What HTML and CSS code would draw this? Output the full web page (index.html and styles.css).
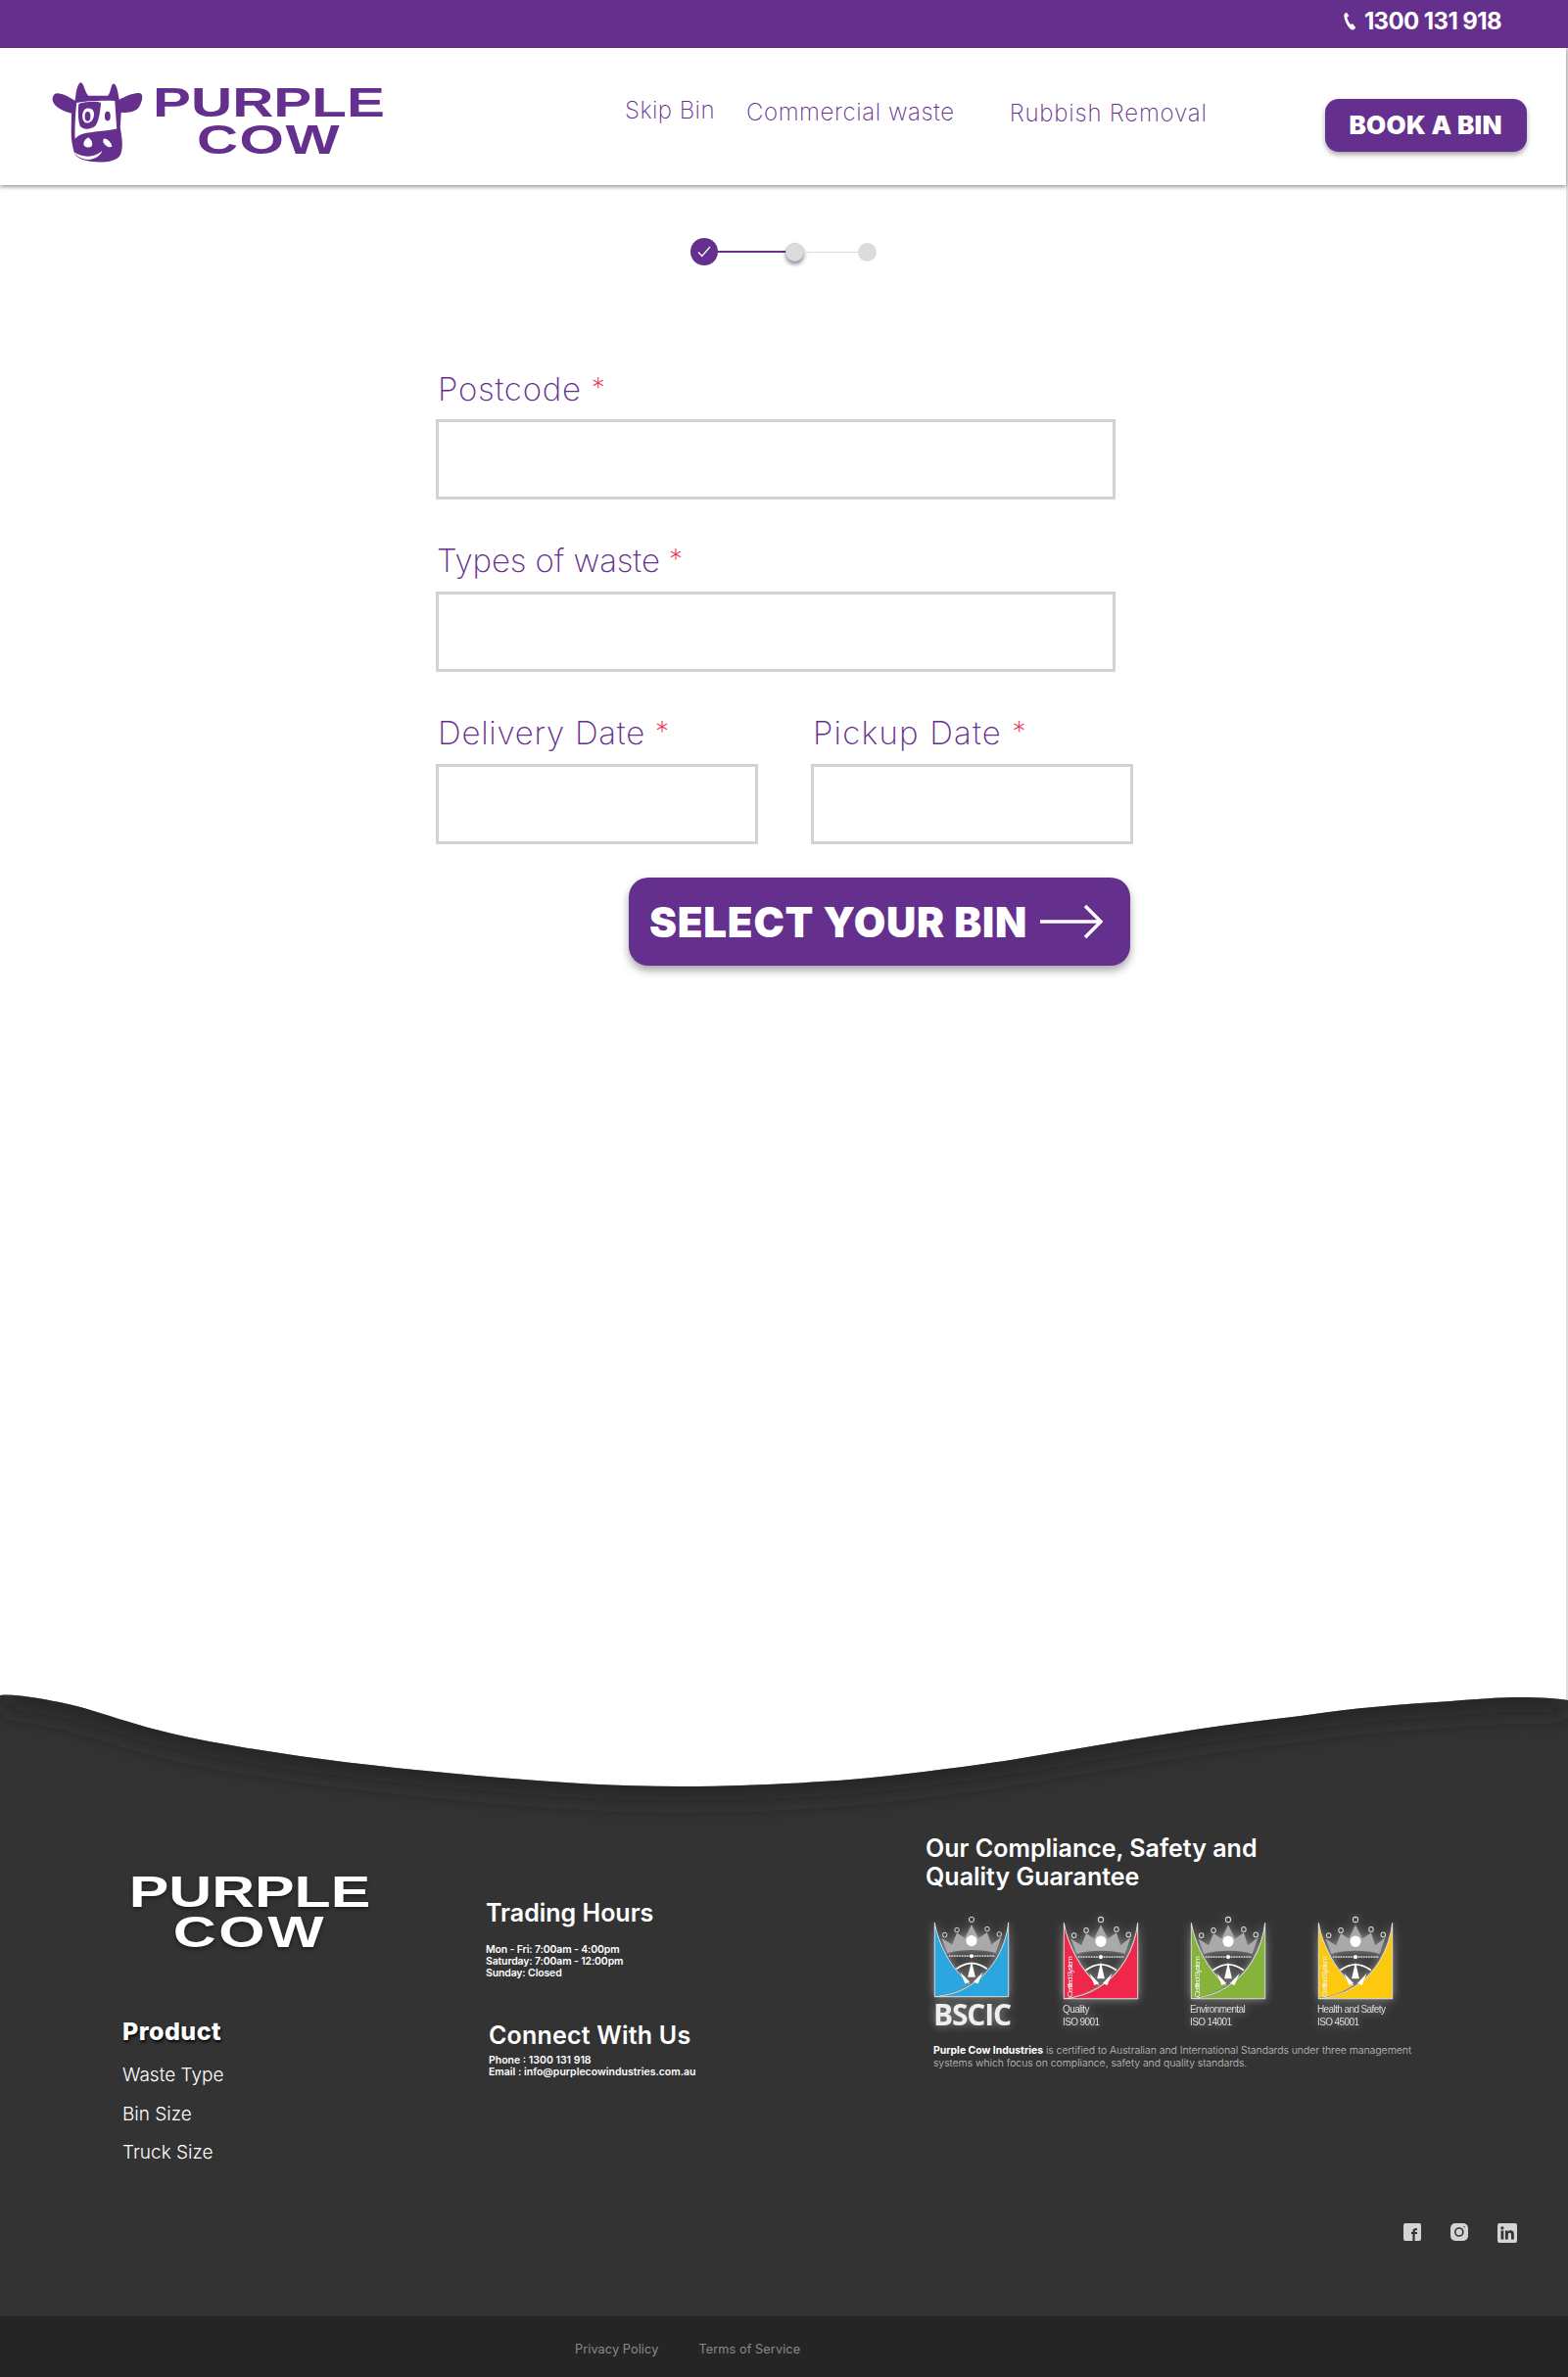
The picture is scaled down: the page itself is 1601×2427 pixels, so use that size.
FILE: index.html
```html
<!DOCTYPE html>
<html lang="en">
<head>
  <meta charset="UTF-8"/>
  <title>Purple Cow – Book a Bin</title>
  <meta name="viewport" content="width=device-width, initial-scale=1.0"/>
  <link rel="stylesheet" href="styles.css">
</head>
<body>

  <svg class="defs" width="0" height="0" aria-hidden="true">
    <symbol id="crest" viewBox="36 20 240 256" preserveAspectRatio="none">
      <path fill="currentColor" d="M40 44C52 110 90 185 150 232C115 255 80 266 40 270Z"/>
      <path fill="currentColor" d="M272 44C262 130 215 200 150 238C115 260 80 268 46 272H272Z"/>
      <path fill="none" stroke="#ddd" stroke-width="3" d="M40 44V272H272V44M40 44C52 110 90 185 150 232M272 44C262 130 215 200 150 238C115 260 80 268 40 272"/>
      <path fill="#a9a9a9" d="M80 138L62 92L95 112L110 76L135 92L156 50L178 92L205 74L218 112L250 88L232 138C190 125 125 125 80 138Z"/>
      <circle cx="156" cy="100" r="17" fill="#fff"/>
      <g fill="none" stroke="#ddd" stroke-width="3">
        <circle cx="156" cy="35" r="8"/>
        <circle cx="110" cy="67" r="7"/>
        <circle cx="205" cy="64" r="7"/>
        <circle cx="72" cy="82" r="7"/>
        <circle cx="243" cy="80" r="7"/>
      </g>
      <path stroke="#ddd" stroke-width="5" stroke-dasharray="3 2" d="M85 147H228"/>
      <circle cx="156" cy="147" r="6" fill="#fff"/>
      <path fill="none" stroke="#fff" stroke-width="5" d="M108 187Q156 152 205 187"/>
      <path fill="#fff" d="M144 212L156 162L168 212ZM120 196L150 226L136 232ZM192 196L162 226L176 232Z"/>
    </symbol>
  </svg>

  <div class="topbar">
    <svg class="phone-icon" viewBox="0 0 12 18"><path fill="#fff" d="M2.6.6L.9 1.7C-.3 2.6.1 5.8 1.7 9.6c1.6 3.800 3.900 7 5.500 7.600.9.300 2 .400 3-.400l1.300-1.300-3.100-4.100-1.800 1c-.5-.4-1.700-2.100-2.500-3.900C3.300 6.700 3 5.500 3.200 5l1.800-.9Z"/></svg>
    <span class="phone-number">1300 131 918</span>
  </div>

  <header class="site-header">
    <a class="logo" href="#">
      <svg class="cow" viewBox="60 64 294 260">
        <path fill="#652f8d" d="M138 112C140 90 147 68 155 68C163 68 166 95 178 110H240C250 98 250 72 258 72C268 72 272 100 276 122C295 112 325 98 342 102C354 106 348 130 338 146C328 160 305 165 282 162L279 210C284 240 290 270 280 295C270 318 225 322 190 318C160 314 140 306 134 290C128 270 124 250 124 225L125 165C105 160 80 150 70 135C60 120 66 103 80 102C98 102 120 115 136 125Z"/>
        <path fill="#fff" d="M141 132C175 126 225 124 262 126L268 214C235 222 190 222 160 230C150 233 140 240 136 246C135 210 137 170 141 132Z"/>
        <path fill="#652f8d" d="M148 135C170 128 205 126 218 132C216 155 212 190 200 205C185 218 160 218 152 205C145 185 145 155 148 135Z"/>
        <path fill="#fff" d="M172 150C188 146 198 156 196 172C194 188 180 200 168 194C156 188 156 155 172 150Z"/>
        <ellipse cx="176" cy="175" rx="9" ry="15" fill="#652f8d"/>
        <ellipse cx="239" cy="174" rx="9" ry="15" fill="#652f8d"/>
        <path fill="#fff" d="M178 241C190 250 194 262 188 270C178 276 164 272 163 262C164 252 170 245 178 241ZM228 245C240 246 252 258 253 270C245 276 232 268 226 258C224 252 225 248 228 245Z"/>
        <path fill="#fff" d="M132 288C160 305 195 308 222 284C214 305 190 315 165 310C150 307 138 298 132 288Z"/>
      </svg>
      <span class="wordmark"><span>PURPLE</span><span>COW</span></span>
    </a>
    <nav class="main-nav">
      <a class="nav-skip" href="#">Skip Bin</a>
      <a class="nav-commercial" href="#">Commercial waste</a>
      <a class="nav-rubbish" href="#">Rubbish Removal</a>
    </nav>
    <a class="book-btn" href="#">BOOK A BIN</a>
  </header>

  <main class="main">
    <div class="stepper">
      <span class="step step-done">
        <svg viewBox="0 0 14 12" width="14" height="12"><path fill="none" stroke="#fff" stroke-width="1.300" d="M1 6.500L4.800 10.500L13 1"/></svg>
      </span>
      <span class="step-line step-line-done"></span>
      <span class="step step-current"></span>
      <span class="step-line"></span>
      <span class="step"></span>
    </div>

    <form class="book-form">
      <div class="field field-wide">
        <label class="label-postcode">Postcode <em>*</em></label>
        <input type="text">
      </div>
      <div class="field field-wide">
        <label class="label-types">Types of waste <em>*</em></label>
        <input type="text">
      </div>
      <div class="date-row">
        <div class="field">
          <label class="label-delivery">Delivery Date <em>*</em></label>
          <input type="text">
        </div>
        <div class="field">
          <label class="label-pickup">Pickup Date <em>*</em></label>
          <input type="text">
        </div>
      </div>
      <button class="select-btn" type="button">
        SELECT YOUR BIN
        <svg viewBox="0 0 64 36" width="64" height="36"><path fill="none" stroke="#fff" stroke-width="3.500" d="M0 18H61M46 2L62 18L46 34"/></svg>
      </button>
    </form>
  </main>

  <footer class="site-footer">
    <svg class="wave" viewBox="0 0 1601 140" width="1601" height="140" preserveAspectRatio="none">
      <defs>
        <clipPath id="wave-clip"><path d="M0 1C14-1 38 4 61 8C85 13 105 20 128 27C185 45 245 54 306 63C370 72 440 79 510 85C570 90 630 94 694 94C755 94 815 91 868 87C925 82 985 74 1032 67C1080 59 1125 51 1175 43C1225 35 1275 28 1328 22C1380 14 1430 10 1481 7C1505 5 1530 3 1552 3C1572 3 1590 4 1601 6V140H0Z"/></clipPath>
        <filter id="wave-blur" x="-5%" y="-100%" width="110%" height="300%"><feGaussianBlur stdDeviation="14"/></filter>
      </defs>
      <path fill="#333" d="M0 1C14-1 38 4 61 8C85 13 105 20 128 27C185 45 245 54 306 63C370 72 440 79 510 85C570 90 630 94 694 94C755 94 815 91 868 87C925 82 985 74 1032 67C1080 59 1125 51 1175 43C1225 35 1275 28 1328 22C1380 14 1430 10 1481 7C1505 5 1530 3 1552 3C1572 3 1590 4 1601 6V140H0Z"/>
      <g clip-path="url(#wave-clip)">
        <path fill="none" stroke="#222" stroke-width="22" filter="url(#wave-blur)" d="M0 1C14-1 38 4 61 8C85 13 105 20 128 27C185 45 245 54 306 63C370 72 440 79 510 85C570 90 630 94 694 94C755 94 815 91 868 87C925 82 985 74 1032 67C1080 59 1125 51 1175 43C1225 35 1275 28 1328 22C1380 14 1430 10 1481 7C1505 5 1530 3 1552 3C1572 3 1590 4 1601 6"/>
      </g>
    </svg>

    <div class="footer-body">
      <div class="footer-col">
        <div class="footer-logo"><span>PURPLE</span><span>COW</span></div>
        <h3 class="product-title">Product</h3>
        <ul class="product-links">
          <li><a href="#">Waste Type</a></li>
          <li><a href="#">Bin Size</a></li>
          <li><a href="#">Truck Size</a></li>
        </ul>
      </div>

      <div class="footer-col">
        <h3 class="footer-title">Trading Hours</h3>
        <p class="small-info hours">Mon - Fri: 7:00am - 4:00pm<br/>Saturday: 7:00am - 12:00pm<br/>Sunday: Closed</p>
        <h3 class="footer-title connect-title">Connect With Us</h3>
        <p class="small-info contact">Phone : 1300 131 918<br/>Email : info@purplecowindustries.com.au</p>
      </div>

      <div class="footer-col">
        <h3 class="footer-title compliance-title">Our Compliance, Safety and<br/>Quality Guarantee</h3>
        <div class="badges">
          <div class="badge badge-main">
            <svg class="crest crest-blue"><use href="#crest"/></svg>
            <span class="bscic">BSCIC</span>
          </div>
          <div class="badge">
            <svg class="crest crest-red" viewBox="36 20 240 256" preserveAspectRatio="none"><use href="#crest" x="36" y="20" width="240" height="256"/><text class="crest-label" transform="translate(66 268) rotate(-90)" textLength="124">Certified System</text></svg>
            <span class="badge-caption">Quality<br/>ISO 9001</span>
          </div>
          <div class="badge">
            <svg class="crest crest-green" viewBox="36 20 240 256" preserveAspectRatio="none"><use href="#crest" x="36" y="20" width="240" height="256"/><text class="crest-label" transform="translate(66 268) rotate(-90)" textLength="124">Certified System</text></svg>
            <span class="badge-caption">Environmental<br/>ISO 14001</span>
          </div>
          <div class="badge">
            <svg class="crest crest-yellow" viewBox="36 20 240 256" preserveAspectRatio="none"><use href="#crest" x="36" y="20" width="240" height="256"/><text class="crest-label" transform="translate(66 268) rotate(-90)" textLength="124">Certified System</text></svg>
            <span class="badge-caption">Health and Safety<br/>ISO 45001</span>
          </div>
        </div>
        <p class="compliance-text"><strong>Purple Cow Industries</strong> is certified to Australian and International Standards under three management systems which focus on compliance, safety and quality standards.</p>
        <div class="social">
          <a href="#"><svg viewBox="0 0 18 18" width="18" height="18"><rect width="18" height="18" rx="2" fill="#d4d4d4"/><path fill="none" stroke="#333" stroke-width="2.200" d="M10.500 18V8.500C10.500 6.500 11.500 6 14 6M8 10H14"/></svg></a>
          <a href="#"><svg viewBox="0 0 18 18" width="18" height="18"><rect width="18" height="18" rx="5" fill="#d4d4d4"/><circle cx="8.800" cy="9" r="4" fill="none" stroke="#333" stroke-width="1.600"/><circle cx="14" cy="3.800" r=".7" fill="#333"/></svg></a>
          <a href="#"><svg viewBox="0 0 20 20" width="20" height="20"><rect width="20" height="20" rx="2" fill="#d4d4d4"/><rect x="3.500" y="7.500" width="2.800" height="9" fill="#333"/><circle cx="4.900" cy="4.900" r="1.600" fill="#333"/><path fill="#333" d="M8 7.500H10.600V8.800C11.200 7.800 12.200 7.300 13.400 7.300C15.800 7.300 16.800 8.800 16.800 11.300V16.500H14V11.800C14 10.500 13.600 9.700 12.500 9.700C11.400 9.700 10.800 10.500 10.800 11.800V16.500H8Z"/></svg></a>
        </div>
      </div>
    </div>

    <div class="footer-bottom">
      <a href="#">Privacy Policy</a>
      <a href="#">Terms of Service</a>
    </div>
  </footer>

</body>
</html>
```

FILE: styles.css
```css
* {
  box-sizing: border-box;
}
body {
  margin: 0;
  width: 1601px;
  font-family: Inter, "Open Sans", sans-serif;
  background: linear-gradient(90deg, #fff 1599px, #dedede 1599px);
  color: #652f8d;
}
a {
  color: inherit;
  text-decoration: none;
}
.defs {
  position: absolute;
}

/* top bar */
.topbar {
  height: 49px;
  background: #652f8d;
  display: flex;
  align-items: center;
  justify-content: flex-end;
  padding-right: 68px;
  padding-bottom: 6px;
  color: #fff;
}
.phone-icon {
  width: 15px;
  height: 19px;
  margin-right: 7px;
}
.phone-number {
  font-size: 24px;
  font-weight: 700;
  letter-spacing: -0.6px;
}

/* header */
.site-header {
  position: relative;
  height: 140px;
  margin-right: 2px;
  background: #fff;
  box-shadow: 0 2px 4px rgba(0, 0, 0, 0.4);
  display: flex;
}
.logo {
  display: flex;
  margin-left: 51px;
  padding-top: 34px;
}
.cow {
  width: 97px;
  height: 84px;
}
.wordmark {
  width: 243px;
  margin-left: 5px;
  padding-top: 3px;
}
.wordmark span,
.footer-logo span {
  display: block;
  font-family: "Liberation Sans", Arial, sans-serif;
  font-weight: 700;
  text-align: center;
  transform: scaleX(1.39);
}
.wordmark span {
  font-size: 42px;
  line-height: 38px;
}
.wordmark span + span {
  letter-spacing: 1px;
}
.main-nav {
  display: flex;
  margin-left: 242px;
  font-size: 24px;
  font-weight: 250;
  line-height: 30px;
}
.nav-skip {
  margin-top: 49px;
  letter-spacing: 0.45px;
}
.nav-commercial {
  margin-top: 51px;
  margin-left: 32px;
  letter-spacing: 0.6px;
}
.nav-rubbish {
  margin-top: 52px;
  margin-left: 56px;
  letter-spacing: 0.8px;
}
.book-btn {
  width: 206px;
  height: 54px;
  margin-top: 52px;
  margin-left: 120px;
  border-radius: 14px;
  background: #652f8d;
  color: #fff;
  font-size: 26px;
  font-weight: 900;
  line-height: 54px;
  text-align: center;
  letter-spacing: 0.3px;
  box-shadow: 0 3px 5px rgba(0, 0, 0, 0.35);
}

/* stepper */
.main {
  height: 1541px;
}
.stepper {
  display: flex;
  align-items: center;
  height: 179px;
  padding: 0 0 43px 705px;
}
.step {
  flex: none;
  width: 19px;
  height: 19px;
  border-radius: 50%;
  background: #dcdcdc;
}
.step-done {
  width: 28px;
  height: 28px;
  background: #652f8d;
  display: flex;
  align-items: center;
  justify-content: center;
}
.step-current {
  margin-left: -1px;
  border: 1px solid #d8c8ea;
  box-shadow: 0 3px 4px rgba(0, 0, 0, 0.45);
}
.step-line {
  width: 55px;
  height: 1px;
  background: #d9d9d9;
}
.step-line-done {
  width: 70px;
  height: 2px;
  background: #652f8d;
}

/* form */
.book-form {
  width: 712px;
  margin-left: 445px;
}
.field {
  margin-bottom: 34px;
}
.field label {
  display: block;
  height: 60px;
  padding-left: 2px;
  font-size: 33px;
  font-weight: 250;
  line-height: 54px;
}
.field .label-postcode {
  line-height: 56px;
  letter-spacing: 0.75px;
}
.field .label-types {
  padding-left: 1px;
  letter-spacing: -0.1px;
}
.label-delivery {
  letter-spacing: 0.75px;
}
.label-pickup {
  letter-spacing: 1.200px;
}
.field label em {
  color: #f0334f;
  font-style: normal;
  font-size: 28px;
  vertical-align: 3px;
}
.field input {
  display: block;
  width: 100%;
  height: 82px;
  border: 3px solid #d2d2d2;
  background: #fff;
}
.field-wide {
  width: 694px;
}
.date-row {
  display: grid;
  grid-template-columns: 329px 329px;
  column-gap: 54px;
}
.select-btn {
  display: flex;
  align-items: center;
  justify-content: space-between;
  width: 512px;
  height: 90px;
  margin-left: 197px;
  padding: 0 28px 0 21px;
  border: 0;
  border-radius: 20px;
  background: #652f8d;
  color: #fff;
  font-family: inherit;
  font-size: 42px;
  font-weight: 900;
  letter-spacing: 0.8px;
  box-shadow: 0 5px 8px rgba(0, 0, 0, 0.35);
}

/* footer */
.wave {
  display: block;
}
.footer-body {
  height: 495px;
  padding-left: 125px;
  background: #333;
  display: grid;
  grid-template-columns: 370px 451px 603px;
  color: #fff;
}
.footer-logo {
  width: 260px;
  margin-top: 41px;
  text-shadow: 0 2px 4px rgba(0, 0, 0, 0.5);
}
.footer-logo span {
  font-size: 45px;
  line-height: 41px;
  transform: scaleX(1.35);
}
.footer-logo span + span {
  letter-spacing: 2px;
}
.product-title {
  margin: 66px 0 10px;
  font-size: 25px;
  font-weight: 800;
  line-height: 30px;
  letter-spacing: 0.45px;
  text-shadow: 1px 2px 3px #000;
}
.product-links {
  list-style: none;
  margin: 0;
  padding: 0;
  font-size: 19px;
  font-weight: 300;
  line-height: 39.500px;
}
.footer-title {
  margin: 0;
  font-size: 25px;
  font-weight: 600;
  line-height: 30px;
}
.footer-col:nth-child(2) .footer-title:first-child {
  margin-top: 68px;
  margin-left: 1px;
}
.small-info {
  margin: 0;
  font-size: 10.500px;
  font-weight: 600;
  line-height: 12px;
}
.hours {
  margin-top: 17px;
  margin-left: 1px;
  letter-spacing: -0.15px;
}
.connect-title {
  margin: 42px 0 5px 4px;
  letter-spacing: 0.2px;
}
.contact {
  margin-left: 4px;
}
.compliance-title {
  margin-top: 3px;
  margin-left: -1px;
  line-height: 29px;
}
.badges {
  display: flex;
  gap: 54px;
  height: 132px;
  margin-top: 24px;
  margin-left: 7px;
}
.badge {
  width: 76px;
  filter: drop-shadow(0 0 5px rgba(255, 255, 255, 0.45));
}
.badge-main {
  width: 78px;
}
.crest {
  display: block;
  width: 78px;
  height: 87px;
}
.crest-blue {
  height: 85px;
  color: #2ba6df;
}
.crest-red {
  color: #ef274b;
}
.crest-green {
  color: #86b43a;
}
.crest-yellow {
  color: #fdc90e;
}
.crest-label {
  fill: #eee;
  font-family: "Liberation Sans", Arial, sans-serif;
  font-size: 25px;
}
.bscic {
  display: block;
  margin-top: 2px;
  font-family: "Open Sans", sans-serif;
  font-size: 30px;
  font-weight: 700;
  line-height: 30px;
  letter-spacing: -1.200px;
  color: #eee;
}
.badge-caption {
  display: block;
  margin-top: 4px;
  font-family: "Liberation Sans", Arial, sans-serif;
  font-size: 10px;
  line-height: 12.500px;
  letter-spacing: -0.6px;
  color: #ddd;
  white-space: nowrap;
}
.compliance-text {
  width: 495px;
  margin: 0 0 0 7px;
  font-size: 10.500px;
  font-weight: 300;
  line-height: 13px;
  letter-spacing: -0.05px;
  color: #c4c4c4;
}
.compliance-text strong {
  color: #fff;
  font-weight: 700;
}
.social {
  display: flex;
  justify-content: flex-end;
  align-items: center;
  gap: 30px;
  margin-top: 157px;
}
.social a {
  display: block;
  height: 20px;
}
.footer-bottom {
  height: 62px;
  padding: 4px 0 0 587px;
  background: #252525;
  display: flex;
  align-items: center;
  gap: 41px;
  color: #8a8a8a;
  font-size: 12.700px;
  letter-spacing: 0.1px;
}
```
